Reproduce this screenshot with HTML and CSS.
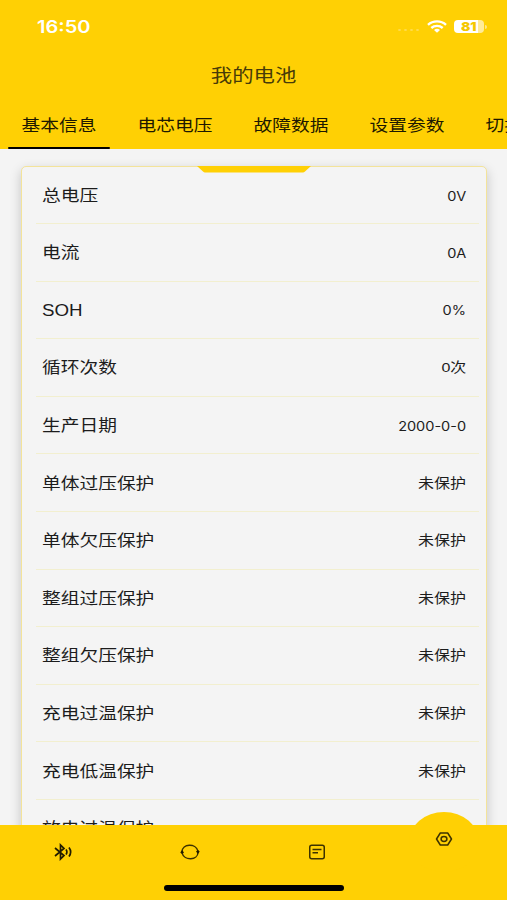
FILE: index.html
```
<!DOCTYPE html>
<html lang="zh-CN">
<head>
    <meta charset="UTF-8">
    <title>我的电池</title>
    <link rel="stylesheet" href="styles.css">
</head>
<body>

<div class="app">
    <header class="header">
        <div class="status">
            <span class="time">16:50</span>
            <div class="status-icons">
                <span class="dots"><i></i><i></i><i></i><i></i></span>
                <svg class="wifi" width="20" height="13" viewBox="0 0 20 13" fill="none" stroke="#fff" stroke-width="2.4">
                    <path d="M1 4.8C6 .2 14 .2 19 4.8"/>
                    <path d="M4.3 8C7.5 5.1 12.500 5.100 15.700 8"/>
                    <path d="M7 9.900Q10 7.500 13 9.900L10 12.700Z" fill="#fff" stroke="none"/>
                </svg>
                <span class="battery"><b>81</b></span>
                <span class="battery-cap"></span>
            </div>
        </div>
        <h1 class="title"><span class="wide">我的电池</span></h1>
        <nav class="tabs">
            <a class="tab active"><span class="wide">基本信息</span></a>
            <a class="tab"><span class="wide">电芯电压</span></a>
            <a class="tab"><span class="wide">故障数据</span></a>
            <a class="tab"><span class="wide">设置参数</span></a>
            <a class="tab"><span class="wide">切换电池</span></a>
        </nav>
    </header>

    <main class="content">
        <div class="card">
            <svg class="notch" width="114" height="7" viewBox="0 0 114 7"><path d="M0 0H114L108 5.500Q107 6.500 106 6.500H8Q7 6.500 6 5.500Z" fill="#ffd004"/></svg>
            <div class="row"><span class="label">总电压</span><span class="value num">0V</span></div>
            <div class="row"><span class="label">电流</span><span class="value num">0A</span></div>
            <div class="row"><span class="label latin">SOH</span><span class="value num">0%</span></div>
            <div class="row"><span class="label">循环次数</span><span class="value">0次</span></div>
            <div class="row"><span class="label">生产日期</span><span class="value num">2000-0-0</span></div>
            <div class="row"><span class="label">单体过压保护</span><span class="value">未保护</span></div>
            <div class="row"><span class="label">单体欠压保护</span><span class="value">未保护</span></div>
            <div class="row"><span class="label">整组过压保护</span><span class="value">未保护</span></div>
            <div class="row"><span class="label">整组欠压保护</span><span class="value">未保护</span></div>
            <div class="row"><span class="label">充电过温保护</span><span class="value">未保护</span></div>
            <div class="row"><span class="label">充电低温保护</span><span class="value">未保护</span></div>
            <div class="row"><span class="label">放电过温保护</span><span class="value">未保护</span></div>
        </div>
    </main>

    <footer class="footer">
        <div class="bump"></div>
        <div class="menu">
            <a class="menu-item">
                <svg width="20" height="18" viewBox="0 0 20 18" fill="none" stroke="#221c00" stroke-width="1.7">
                    <path d="M2 5L11 12.500L7.500 16V2L11 5.500L2 13"/>
                    <path d="M13 6.500Q14.800 9 13 11.500M16 4.500Q19.300 9 16 13.500"/>
                </svg>
            </a>
            <a class="menu-item">
                <svg width="20" height="16" viewBox="0 0 20 16" fill="none" stroke="#3d3200" stroke-width="1.4">
                    <path d="M2 8C2 -.8 16 -.9 17.900 7M18 8C18 16.800 4 16.900 2.100 9"/>
                    <path d="M.3 8.500L2 6L4 8.500L2 10ZM19.700 7.500L18 10L16 7.500L18 6Z" fill="#221c00" stroke="none"/>
                </svg>
            </a>
            <a class="menu-item">
                <svg width="18" height="16" viewBox="0 0 18 16" fill="none" stroke="#3d3200" stroke-width="1.5">
                    <rect x="1.750" y="1.250" width="14.500" height="13.500" rx="2"/>
                    <path d="M4.500 5.500H13.500M4.500 8.700H10"/>
                </svg>
            </a>
            <a class="menu-item raised">
                <svg width="18" height="14" viewBox="0 0 18 14" fill="none" stroke="#3d3200" stroke-width="1.5" stroke-linejoin="round">
                    <path d="M5.300 1H12.700L16.500 7L12.700 13H5.300L1.500 7Z"/>
                    <ellipse cx="9" cy="7" rx="2.900" ry="2.400"/>
                </svg>
            </a>
        </div>
        <div class="home-bar"></div>
    </footer>
</div>

</body>
</html>
```
FILE: styles.css
```
* {
    box-sizing: border-box;
}
body {
    margin: 0;
    font-family: "Liberation Sans", "Noto Sans CJK SC", sans-serif;
    background-color: #f4f4f4;
    color: #1c1c1c;
}
.app {
    display: flex;
    flex-direction: column;
    height: 900px;
    overflow: hidden;
}
.header {
    flex: none;
    height: 149px;
    background: #ffd004;
    overflow: hidden;
}
.status {
    display: flex;
    justify-content: space-between;
    align-items: center;
    height: 53px;
    padding: 0 20px 0 37px;
}
.time {
    color: #fff;
    font-family: Inter, sans-serif;
    font-size: 17px;
    font-weight: 600;
    transform: scaleX(1.18);
    transform-origin: left;
}
.status-icons {
    display: flex;
    align-items: center;
}
.dots {
    display: flex;
    gap: 3px;
    margin: 7px 8px 0 0;
}
.dots i {
    width: 3px;
    height: 2px;
    border-radius: 50%;
    background: #ffdc4d;
}
.battery {
    width: 30px;
    height: 13px;
    margin-left: 7px;
    border-radius: 4px;
    background: linear-gradient(to right, #fff 81%, #ffeb9b 81%);
    color: #f5c800;
    font: 700 12px/13px Inter, sans-serif;
    text-align: center;
}
.battery b {
    display: inline-block;
    transform: scaleX(1.15);
}
.battery-cap {
    width: 2px;
    height: 4px;
    margin-left: 1px;
    border-radius: 0 2px 2px 0;
    background: #ffe68a;
}
.wide {
    display: inline-block;
    transform: scaleX(1.17);
}
.title {
    height: 48px;
    margin: 0;
    color: #473b08;
    font-size: 18.3px;
    font-weight: 400;
    line-height: 46px;
    text-align: center;
}
.tabs {
    display: flex;
    height: 48px;
    padding-left: 1px;
}
.tab {
    flex: none;
    width: 116px;
    padding: 0 7px;
    font-size: 16px;
    line-height: 49px;
    text-align: center;
    color: #1d1800;
    white-space: nowrap;
}
.tab.active::after {
    content: "";
    display: block;
    height: 2.5px;
    margin-top: -3.5px;
    border-radius: 2px;
    background: #000;
}
.content {
    flex: 1;
    min-height: 0;
    padding: 17px 20px 0 21px;
    overflow: hidden;
}
.card {
    position: relative;
    padding: 0 7px 0 14px;
    border: 1px solid #f3e39a;
    border-radius: 5px;
    box-shadow: 0 4px 12px rgba(0, 0, 0, 0.2);
    background: #f4f4f4;
}
.notch {
    position: absolute;
    top: -1px;
    left: 175px;
}
.row {
    display: flex;
    justify-content: space-between;
    align-items: center;
    height: 57.6px;
    padding: 0 13px 2px 6px;
    border-bottom: 1px solid #f2efcf;
}
.row:nth-of-type(1) {
    height: 57px;
}
.label {
    font-size: 16px;
    transform: scaleX(1.17);
    transform-origin: left;
}
.value {
    font-size: 13.7px;
    transform: scaleX(1.17);
    transform-origin: right;
}
.latin,
.num {
    padding-top: 4px;
}
.num {
    font-family: Inter, sans-serif;
    font-size: 12.4px;
}
.footer {
    position: relative;
    flex: none;
    height: 75px;
    background: #ffd004;
}
.bump {
    position: absolute;
    top: -13px;
    right: 28px;
    width: 70px;
    height: 60px;
    border-radius: 50%;
    background: #ffd004;
}
.menu {
    position: relative;
    display: flex;
    height: 60px;
}
.menu-item {
    display: flex;
    flex: 1;
    justify-content: center;
    align-items: center;
    height: 54px;
}
.menu-item.raised {
    height: 27px;
}
.home-bar {
    width: 180px;
    height: 6px;
    margin: 0 auto;
    border-radius: 3px;
    background: #000;
}
```
